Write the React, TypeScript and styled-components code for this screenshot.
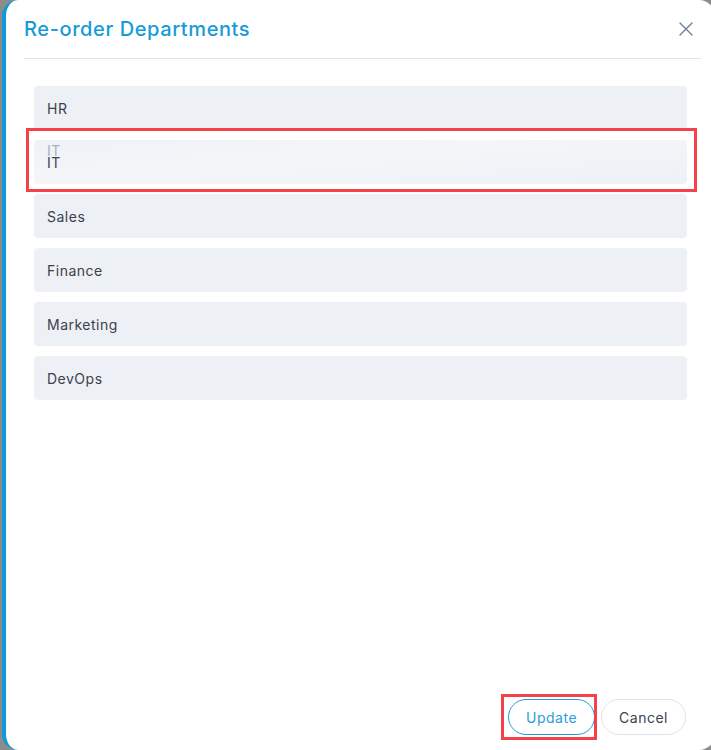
import React from "react";
import styled, { createGlobalStyle } from "styled-components";

const departments = ["HR", "IT", "Sales", "Finance", "Marketing", "DevOps"];
const dragging = "IT";

const GlobalStyle = createGlobalStyle`
  html, body {
    margin: 0;
    padding: 0;
    height: 750px;
    overflow: hidden;
    background: #8c8c8c;
    font-family: "Inter", "Open Sans", sans-serif;
  }
`;

const Dialog = styled.div`
  box-sizing: border-box;
  display: flex;
  flex-direction: column;
  width: 713px;
  height: 750px;
  margin-left: 2px;
  background: #ffffff;
  border-left: 4px solid #0e9ad8;
  border-radius: 16px;
  padding: 0 14px 15px 18px;
`;

const Header = styled.div`
  display: flex;
  align-items: center;
  justify-content: space-between;
  height: 58px;
  border-bottom: 1px solid #dfe4ec;
`;

const Title = styled.h2`
  margin: 0;
  font-size: 20px;
  font-weight: 500;
  color: #169bd8;
  letter-spacing: 0.6px;
`;

const CloseButton = styled.button`
  display: flex;
  align-items: center;
  justify-content: center;
  width: 24px;
  height: 24px;
  margin-right: 3px;
  padding: 0;
  border: none;
  background: none;
  color: #6f7f95;
  cursor: pointer;
`;

const List = styled.div`
  display: flex;
  flex-direction: column;
  gap: 10px;
  padding: 27px 14px 0 10px;
  flex: 1;
`;

const Row = styled.div<{ $ghost?: boolean }>`
  position: relative;
  display: flex;
  align-items: center;
  height: 44px;
  padding: 0 13px;
  background: ${({ $ghost }) =>
    $ghost ? "linear-gradient(175deg, #eef1f6 0%, #f4f6f9 40%, #edf0f5 100%)" : "#edf0f5"};
  border-radius: 4px;
  font-size: 14px;
  letter-spacing: 0.5px;
  color: #3c414c;
`;

const GhostLabel = styled.span`
  position: absolute;
  left: 13px;
  top: 2px;
  font-size: 14px;
  color: #acb1ba;
`;

const Highlight = styled.div<{ $t: number; $r: number; $b: number; $l: number }>`
  position: absolute;
  top: ${({ $t }) => $t}px;
  right: ${({ $r }) => $r}px;
  bottom: ${({ $b }) => $b}px;
  left: ${({ $l }) => $l}px;
  border: 3px solid #f2434a;
  pointer-events: none;
`;

const Footer = styled.div`
  display: flex;
  justify-content: flex-end;
  gap: 6px;
  padding-right: 15px;
`;

const Button = styled.button<{ $primary?: boolean }>`
  position: relative;
  height: 36px;
  padding: 0 17px;
  border-radius: 18px;
  background: #ffffff;
  border: 1px solid ${({ $primary }) => ($primary ? "#1a9fda" : "#dfe4ec")};
  color: ${({ $primary }) => ($primary ? "#2a9fd8" : "#3c414c")};
  font-family: inherit;
  font-size: 14px;
  letter-spacing: 0.5px;
  cursor: pointer;
`;

export default function App() {
  return (
    <>
      <GlobalStyle />
      <Dialog>
        <Header>
          <Title>Re-order Departments</Title>
          <CloseButton aria-label="Close">
            <svg width="16" height="16" viewBox="0 0 16 16" fill="none" stroke="currentColor" strokeWidth="1.4" strokeLinecap="round">
              <path d="M2 2 L14 14 M14 2 L2 14" />
            </svg>
          </CloseButton>
        </Header>
        <List>
          {departments.map((d) => (
            <Row key={d} $ghost={d === dragging}>
              {d === dragging && <GhostLabel>{d}</GhostLabel>}
              {d}
              {d === dragging && <Highlight $t={-12} $r={-10} $b={-8} $l={-8} />}
            </Row>
          ))}
        </List>
        <Footer>
          <Button $primary>
            Update
            <Highlight $t={-6} $r={-3} $b={-6} $l={-8} />
          </Button>
          <Button>Cancel</Button>
        </Footer>
      </Dialog>
    </>
  );
}
